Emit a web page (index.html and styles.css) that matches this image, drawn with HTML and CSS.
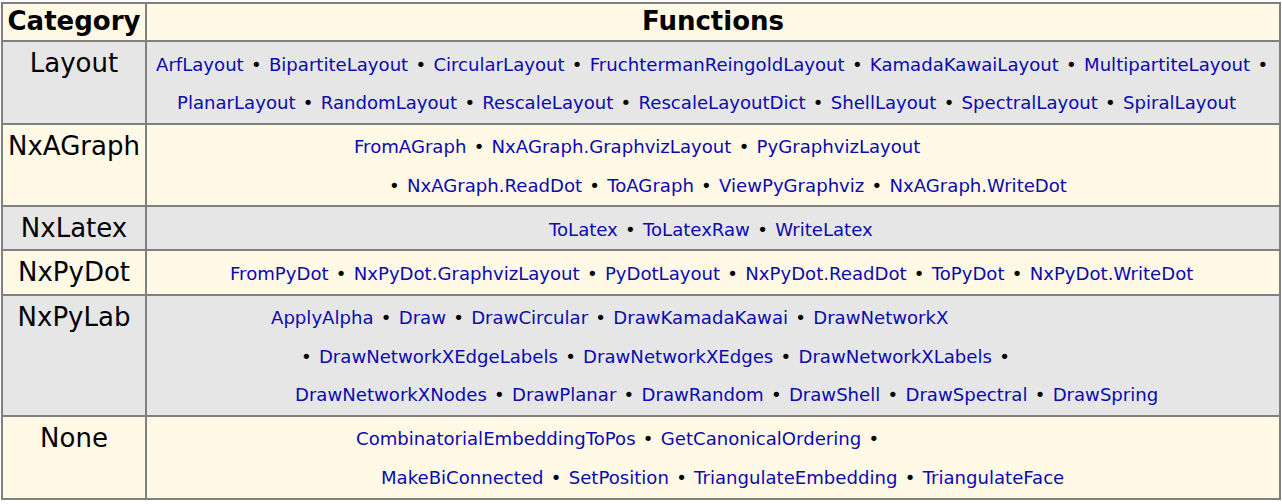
FILE: index.html
```html
<!DOCTYPE html>
<html>
<head>
<meta charset="utf-8">
<link rel="stylesheet" href="styles.css">
</head>
<body>
<table class="grid">
  <tr class="row cream">
    <th class="head head-cat">Category</th>
    <th class="head head-fns">Functions</th>
  </tr>
  <tr class="row gray">
    <td class="cat">Layout</td>
    <td class="fns">
      <div class="ln layout-1"><a>ArfLayout</a> • <a>BipartiteLayout</a> • <a>CircularLayout</a> • <a>FruchtermanReingoldLayout</a> • <a>KamadaKawaiLayout</a> • <a>MultipartiteLayout</a> •</div>
      <div class="ln layout-2"><a>PlanarLayout</a> • <a>RandomLayout</a> • <a>RescaleLayout</a> • <a>RescaleLayoutDict</a> • <a>ShellLayout</a> • <a>SpectralLayout</a> • <a>SpiralLayout</a></div>
    </td>
  </tr>
  <tr class="row cream">
    <td class="cat">NxAGraph</td>
    <td class="fns">
      <div class="ln agraph-1"><a>FromAGraph</a> • <a>NxAGraph.GraphvizLayout</a> • <a>PyGraphvizLayout</a></div>
      <div class="ln agraph-2">• <a>NxAGraph.ReadDot</a> • <a>ToAGraph</a> • <a>ViewPyGraphviz</a> • <a>NxAGraph.WriteDot</a></div>
    </td>
  </tr>
  <tr class="row gray">
    <td class="cat">NxLatex</td>
    <td class="fns">
      <div class="ln latex-1"><a>ToLatex</a> • <a>ToLatexRaw</a> • <a>WriteLatex</a></div>
    </td>
  </tr>
  <tr class="row cream">
    <td class="cat">NxPyDot</td>
    <td class="fns">
      <div class="ln pydot-1"><a>FromPyDot</a> • <a>NxPyDot.GraphvizLayout</a> • <a>PyDotLayout</a> • <a>NxPyDot.ReadDot</a> • <a>ToPyDot</a> • <a>NxPyDot.WriteDot</a></div>
    </td>
  </tr>
  <tr class="row gray">
    <td class="cat">NxPyLab</td>
    <td class="fns">
      <div class="ln pylab-1"><a>ApplyAlpha</a> • <a>Draw</a> • <a>DrawCircular</a> • <a>DrawKamadaKawai</a> • <a>DrawNetworkX</a></div>
      <div class="ln pylab-2">• <a>DrawNetworkXEdgeLabels</a> • <a>DrawNetworkXEdges</a> • <a>DrawNetworkXLabels</a> •</div>
      <div class="ln pylab-3"><a>DrawNetworkXNodes</a> • <a>DrawPlanar</a> • <a>DrawRandom</a> • <a>DrawShell</a> • <a>DrawSpectral</a> • <a>DrawSpring</a></div>
    </td>
  </tr>
  <tr class="row cream">
    <td class="cat">None</td>
    <td class="fns">
      <div class="ln none-1"><a>CombinatorialEmbeddingToPos</a> • <a>GetCanonicalOrdering</a> •</div>
      <div class="ln none-2"><a>MakeBiConnected</a> • <a>SetPosition</a> • <a>TriangulateEmbedding</a> • <a>TriangulateFace</a></div>
    </td>
  </tr>
</table>
</body>
</html>
```

FILE: styles.css
```css
html, body {
  margin: 0;
  padding: 0;
  background: #ffffff;
}

body {
  padding: 2px 0 0 1px;
  font-family: "DejaVu Sans", sans-serif;
  color: #000000;
}

.grid {
  border-collapse: separate;
  border-spacing: 0;
  border-top: 2px solid #808080;
  border-left: 2px solid #808080;
  width: 1280px;
  table-layout: fixed;
}

.grid td, .grid th {
  border-right: 2px solid #808080;
  border-bottom: 2px solid #808080;
  padding: 0;
  vertical-align: top;
}

.cream { background: #fff9e6; }
.gray { background: #e6e6e6; }

.grid th.head {
  font-weight: bold;
  font-size: 26px;
  line-height: 30px;
  height: 38px;
  padding: 2px 0 4px;
  box-sizing: border-box;
  text-align: center;
  white-space: nowrap;
}

.grid th.head-cat { width: 144px; }

.grid td.cat {
  text-align: center;
  font-size: 26px;
  line-height: 30px;
  padding-top: 6px;
  white-space: nowrap;
}

.grid td.fns {
  padding-top: 3.5px;
  font-size: 18.1px;
  line-height: 38.6px;
}

.ln {
  white-space: nowrap;
  text-align: left;
  word-spacing: 1.5px;
}

.ln a {
  color: #0a0ab0;
  text-decoration: none;
}

.layout-1 { padding-left: 9px; }
.layout-2 { padding-left: 30px; }
.agraph-1 { padding-left: 207px; }
.agraph-2 { padding-left: 242px; }
.latex-1 { padding-left: 402px; }
.pydot-1 { padding-left: 83px; }
.pylab-1 { padding-left: 124px; }
.pylab-2 { padding-left: 154px; }
.pylab-3 { padding-left: 148px; }
.none-1 { padding-left: 209px; }
.none-2 { padding-left: 234px; }
```
